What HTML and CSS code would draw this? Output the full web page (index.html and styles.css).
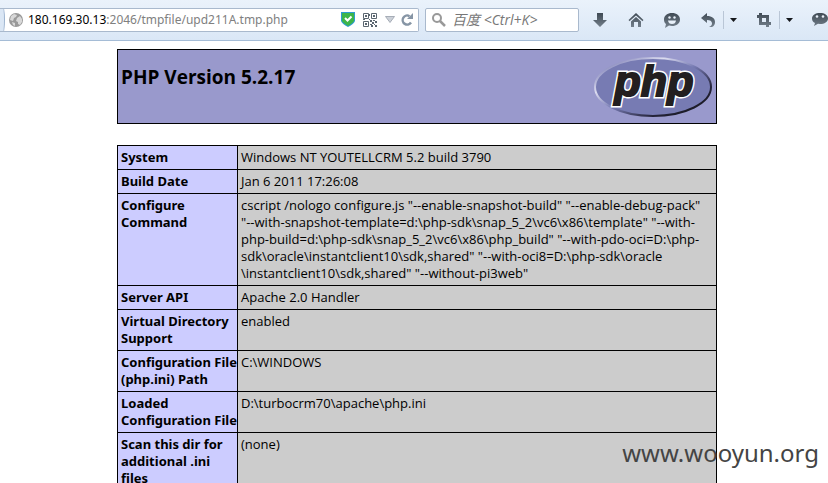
FILE: index.html
```
<!DOCTYPE html>
<html lang="en">
<head>
<meta charset="utf-8">
<title>phpinfo()</title>
<link rel="stylesheet" href="styles.css">
</head>
<body>
<header class="toolbar">
  <div class="urlbar">
    <span class="back-edge"></span>
    <svg class="globe" width="14" height="14" viewBox="0 0 14 14" aria-hidden="true"><circle cx="7" cy="7" r="7" fill="#999"/><path d="M2 3l3-2 3 1-1 2-2 1-1 3-3-1zM8 5l3-2 2 3v3l-2 3-2-1V9L7 8zM3 9l3 1v3l-2-1z" fill="#d8d8d8"/></svg>
    <div class="address" role="textbox" aria-label="Address" contenteditable="true" spellcheck="false"><span class="host">180.169.30.13</span>:2046/tmpfile/upd211A.tmp.php</div>
    <svg class="shield" width="14" height="15" viewBox="0 0 14 15" aria-hidden="true"><path d="M0 0h14v9q-1 3-7 6Q1 12 0 9z" fill="#2d9bd2"/><path d="M1 1h12v8q-1 2-6 5Q2 11 1 9z" fill="#3db54a"/><path d="M4 6l2.500 2.500L10.500 4.500" fill="none" stroke="#fff" stroke-width="2"/></svg>
    <svg class="qr" width="14" height="14" viewBox="0 0 14 14" aria-hidden="true"><g fill="none" stroke="#5b6670"><path d="M.5.5h5v5h-5zM8.500.5h5v5h-5zM.5 8.500h5v5h-5z"/></g><path fill="#5b6670" d="M2 2h2v2H2zM10 2h2v2h-2zM2 10h2v2H2zM7 7h2v2H7zM10 7h2v1h-2zM12 8h2v2h-2zM9 9h2v2H9zM7 11h2v1H7zM11 11h1v1h-1zM8 12h2v2H8zM12 12h2v2h-2zM6 6h1v1H6zM6 1h1v2H6zM0 6h2v1H0z"/></svg>
    <svg class="history" width="10" height="7" viewBox="0 0 10 7" aria-hidden="true"><path d="M.5.5h9L5 6.500z" fill="#ccd1d8" stroke="#a6adb7"/></svg>
    <button class="icon" aria-label="Reload"><svg width="12" height="13" viewBox="0 0 12 13"><path d="M8.500 3.200A4.500 4.500 0 1 0 10 9.500" fill="none" stroke="#8695a5" stroke-width="2.400"/><path d="M12 0v6H6z" fill="#8695a5"/></svg></button>
  </div>
  <label class="search">
    <svg width="14" height="14" viewBox="0 0 14 14" aria-hidden="true"><circle cx="5" cy="5" r="4" fill="none" stroke="#999" stroke-width="2"/><path d="M8 8l5 5" stroke="#999" stroke-width="2.500"/></svg>
    <input type="text" placeholder="百度 &lt;Ctrl+K&gt;" aria-label="Search">
  </label>
  <nav class="actions">
    <button class="icon" aria-label="Downloads"><svg width="16" height="16" viewBox="0 0 16 16"><path d="M5 1h6v7h4l-7 7-7-7h4z" fill="url(#steel)"/></svg></button>
    <button class="icon" aria-label="Home"><svg width="16" height="16" viewBox="0 0 16 16"><path d="M.5 8L8 1l7.500 7-1 1.200L8 3.500 1.500 9.200zM3 9.500l5-4.500 5 4.500V15h-3v-5H6v5H3z" fill="url(#steel)"/></svg></button>
    <button class="icon" aria-label="Feedback"><svg width="16" height="16" viewBox="0 0 16 16"><path d="M8 1c4.500 0 8 2.600 8 6.500S12.500 14 8 14c-1 0-2 0-3-.4L1 16l1-4C.7 11 0 9.500 0 7.500 0 3.600 3.500 1 8 1z" fill="url(#steel)"/><path d="M4 8.500h8Q11.500 12 8 12T4 8.500z" fill="#e8f0f9"/><circle cx="5.500" cy="5.500" r="1.200" fill="#e8f0f9"/><circle cx="10.500" cy="5.500" r="1.200" fill="#e8f0f9"/></svg></button>
    <div class="split">
      <button class="icon" aria-label="Undo close"><svg width="16" height="16" viewBox="0 0 16 16"><path d="M1 6l6-5v3c5 0 8 2.500 8 6 0 2.500-1 4-3 5H9c2-1 3-2 3-3.500C12 9 10 8 7 8v3z" fill="url(#steel)"/></svg></button>
      <button class="icon more" aria-label="Recently closed"><svg width="7" height="4" viewBox="0 0 7 4"><path d="M0 0h7L3.500 4z" fill="#15181c"/></svg></button>
    </div>
    <div class="split">
      <button class="icon" aria-label="Capture"><svg width="16" height="16" viewBox="0 0 16 16"><path d="M1 4.500h10.500V15M4.500 1v10.500H15" fill="none" stroke="url(#steel)" stroke-width="3"/></svg></button>
      <button class="icon more" aria-label="Capture options"><svg width="7" height="4" viewBox="0 0 7 4"><path d="M0 0h7L3.500 4z" fill="#15181c"/></svg></button>
    </div>
    <button class="icon" aria-label="Chat"><svg width="16" height="16" viewBox="0 0 16 16"><path d="M8 1c4.500 0 8 2 8 5.500S12.500 12 8 12l-2-.2L2 14l1-3C1 10 0 8.500 0 6.500 0 3 3.500 1 8 1z" fill="url(#steel)"/><circle cx="5" cy="4.500" r="1.300" fill="#e8f0f9"/><circle cx="11" cy="4.500" r="1.300" fill="#e8f0f9"/></svg></button>
  </nav>
  <svg class="defs" width="0" height="0" aria-hidden="true"><defs><linearGradient id="steel" gradientUnits="userSpaceOnUse" x1="0" y1="1" x2="0" y2="16"><stop stop-color="#3f4a54"/><stop offset="1" stop-color="#77838f"/></linearGradient></defs></svg>
</header>
<main class="page">
  <section class="banner">
    <h1>PHP Version 5.2.17</h1>
    <svg class="logo" width="120" height="67" viewBox="0 0 120 67" role="img" aria-label="PHP logo">
      <defs><linearGradient id="rim" x1="0" y1="0" x2="1" y2="1"><stop offset=".1" stop-color="#8587bb"/><stop offset=".3" stop-color="#dcdcf0"/><stop offset=".5" stop-color="#777bb3"/><stop offset=".75" stop-color="#25243a"/><stop offset="1" stop-color="#111"/></linearGradient></defs>
      <ellipse cx="60" cy="34" rx="58" ry="29" fill="#777bb3" stroke="url(#rim)" stroke-width="2"/>
      <g class="logo-text" text-anchor="middle">
        <text class="halo" x="61" y="43" aria-hidden="true">php</text>
        <text class="ink" x="61" y="43">php</text>
      </g>
    </svg>
  </section>
  <table class="info">
    <tbody>
      <tr><th scope="row">System</th><td>Windows NT YOUTELLCRM 5.2 build 3790</td></tr>
      <tr><th scope="row">Build Date</th><td>Jan 6 2011 17:26:08</td></tr>
      <tr><th scope="row">Configure<br>Command</th><td>cscript /nologo configure.js "--enable-snapshot-build" "--enable-debug-pack"<br>"--with-snapshot-template=d:\php-sdk\snap_5_2\vc6\x86\template" "--with-<br>php-build=d:\php-sdk\snap_5_2\vc6\x86\php_build" "--with-pdo-oci=D:\php-<br>sdk\oracle\instantclient10\sdk,shared" "--with-oci8=D:\php-sdk\oracle<br>\instantclient10\sdk,shared" "--without-pi3web"</td></tr>
      <tr><th scope="row">Server API</th><td>Apache 2.0 Handler</td></tr>
      <tr><th scope="row">Virtual Directory<br>Support</th><td>enabled</td></tr>
      <tr><th scope="row">Configuration File<br>(php.ini) Path</th><td>C:\WINDOWS</td></tr>
      <tr><th scope="row">Loaded<br>Configuration File</th><td>D:\turbocrm70\apache\php.ini</td></tr>
      <tr><th scope="row">Scan this dir for<br>additional .ini<br>files</th><td>(none)</td></tr>
    </tbody>
  </table>
</main>
<div class="watermark">www.wooyun.org</div>
</body>
</html>
```
FILE: styles.css
```
* { box-sizing: border-box; }
html, body { height: 100%; }
body {
  margin: 0;
  overflow: hidden;
  position: relative;
  background: #fff;
  color: #000;
  font: 13px/17px "Open Sans", "Noto Sans CJK SC", sans-serif;
}
.toolbar {
  display: flex;
  align-items: center;
  height: 41px;
  padding-bottom: 1px;
  border-bottom: 1px solid #a5bcd6;
  background: linear-gradient(#eaf2fb, #dae7f6);
}
.icon {
  display: flex;
  align-items: center;
  padding: 0;
  border: 0;
  background: none;
}
.urlbar, .search {
  display: flex;
  align-items: center;
  height: 24px;
  border: 1px solid #a9b9cd;
  background: #fff;
}
.urlbar {
  flex: 1;
  padding-right: 5px;
  border-left: 0;
  border-radius: 0 2px 2px 0;
  overflow: hidden;
}
.back-edge {
  width: 5px;
  height: 28px;
  border-right: 1px solid #9eb4cf;
  border-radius: 0 50% 50% 0;
  background: #dbe7f5;
}
.globe { margin: 0 5px 0 4px; }
.address {
  flex: 1;
  color: #808080;
  font-family: "Noto Sans", sans-serif;
  font-size: 12px;
  white-space: nowrap;
  outline: 0;
}
.host { color: #000; }
.qr { margin: 0 8px; }
.history { margin-right: 6px; }
.search {
  width: 154px;
  margin-left: 6px;
  padding: 0 6px;
  border-radius: 2px;
}
.search input {
  flex: 1;
  min-width: 0;
  margin-left: 6px;
  padding: 0;
  border: 0;
  outline: 0;
  background: none;
  font: inherit;
}
.search input::placeholder { color: #777; font-style: italic; }
.search input { font-size: 14px; }
.actions {
  display: flex;
  align-items: center;
  gap: 20px;
  width: 249px;
  padding-left: 13px;
}
.actions svg { flex: none; }
.split { display: flex; margin-right: -1px; }
.more {
  height: 18px;
  margin-left: 7px;
  padding-left: 6px;
  border-left: 1px solid #b9c6d6;
}
.defs { position: absolute; }
.page {
  max-width: 606px;
  margin: 8px auto 0;
  padding-left: 6px;
}
.banner {
  display: flex;
  justify-content: space-between;
  height: 75px;
  padding: 3px;
  border: 1px solid #000;
  background: #9999cc;
}
h1 { margin: 12px 0 0; font-size: 19px; line-height: 24px; }
.logo-text { font: italic bold 43px "Liberation Sans", sans-serif; }
.halo { fill: #fff; stroke: #fff; stroke-width: 5px; }
.ink { fill: #231f20; stroke: #231f20; stroke-width: 2px; }
.info {
  width: 100%;
  margin-top: 21px;
  border-collapse: collapse;
}
.info th, .info td {
  padding: 3px;
  border: 1px solid #000;
  text-align: left;
  vertical-align: top;
  white-space: nowrap;
}
.info th {
  width: 119px;
  padding-right: 0;
  background: #ccccff;
  font-family: "Noto Sans", sans-serif;
}
.info td { background: #cccccc; }
.watermark {
  position: absolute;
  right: 9px;
  bottom: 13px;
  color: #444;
  font-family: "Noto Sans", sans-serif;
  font-size: 24px;
  line-height: 34px;
}
```
